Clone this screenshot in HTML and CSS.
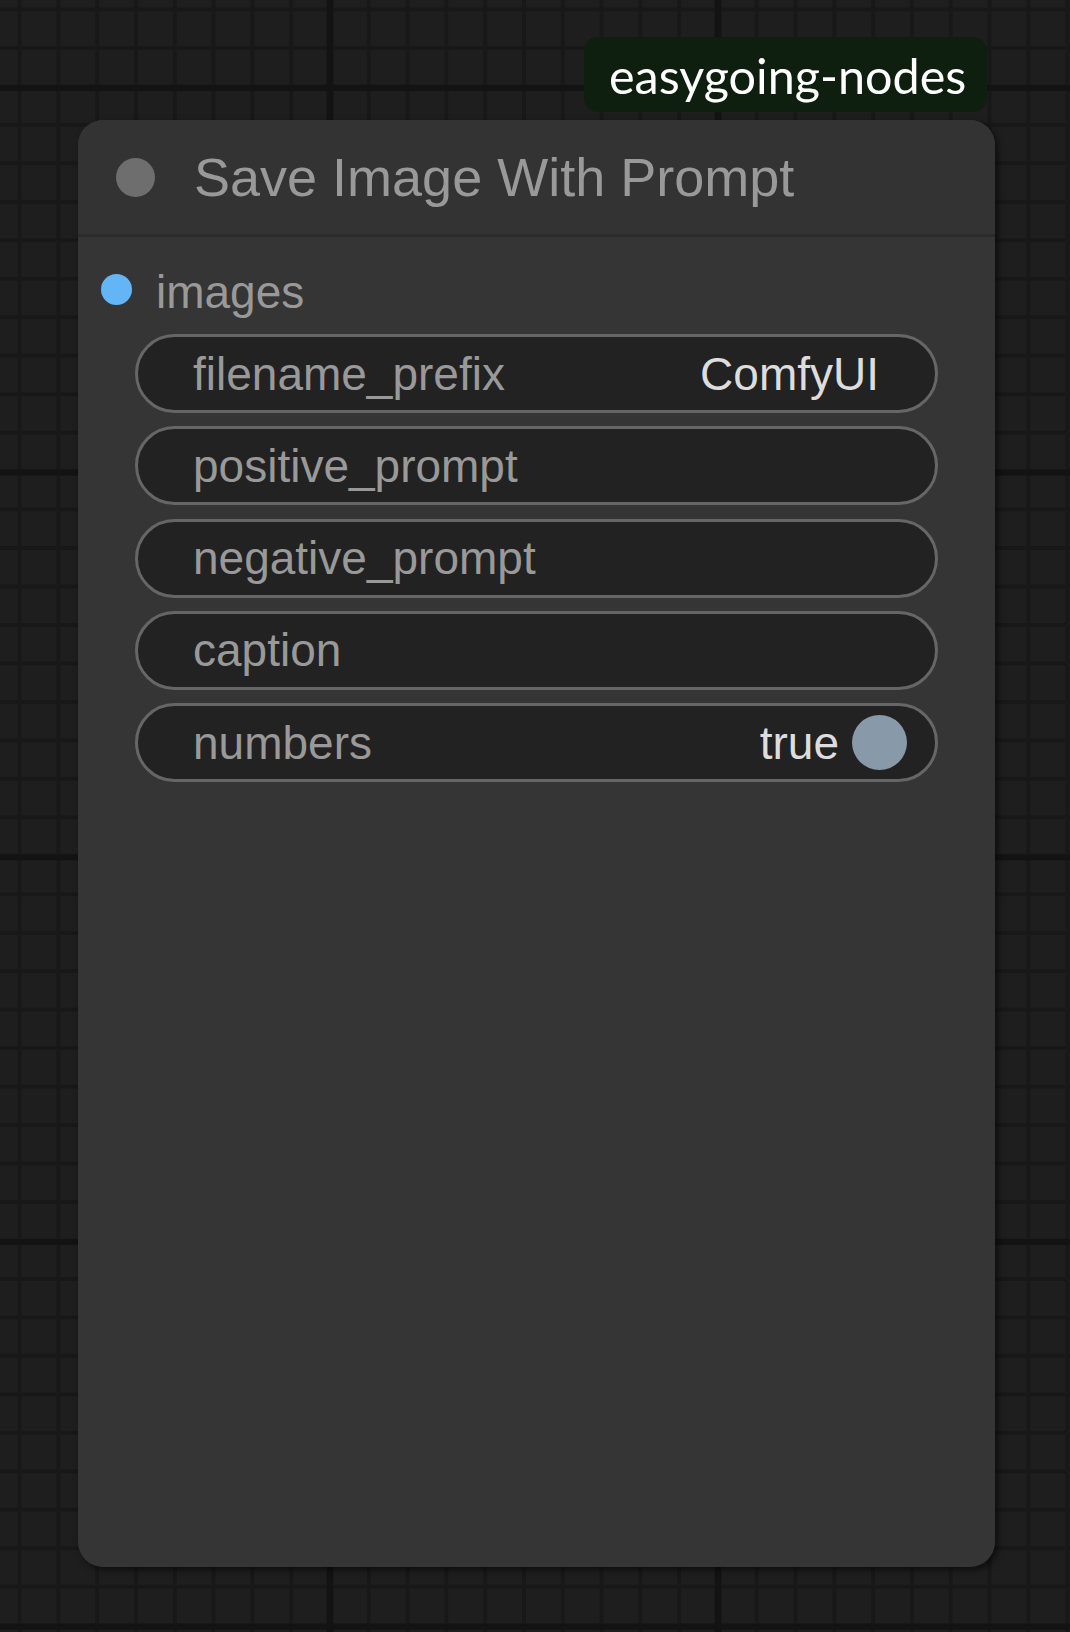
FILE: index.html
```html
<!DOCTYPE html>
<html lang="en">
<head>
<meta charset="utf-8">
<title>Save Image With Prompt</title>
<link rel="stylesheet" href="styles.css">
</head>
<body>
<div class="canvas">
  <div class="badge">easygoing-nodes</div>
  <div class="node">
    <div class="node-title">
      <span class="title-dot"></span>
      <span class="title-text">Save Image With Prompt</span>
    </div>
    <div class="node-body">
      <div class="slot">
        <span class="slot-dot"></span>
        <span class="slot-label">images</span>
      </div>
      <div class="widgets">
        <div class="widget"><span class="w-label">filename_prefix</span><span class="w-value">ComfyUI</span></div>
        <div class="widget"><span class="w-label">positive_prompt</span></div>
        <div class="widget"><span class="w-label">negative_prompt</span></div>
        <div class="widget"><span class="w-label">caption</span></div>
        <div class="widget toggle"><span class="w-label">numbers</span><span class="w-value">true</span><span class="knob"></span></div>
      </div>
    </div>
  </div>
</div>
</body>
</html>
```

FILE: styles.css
```css
html, body {
  margin: 0;
  padding: 0;
}

body {
  width: 1070px;
  height: 1632px;
  overflow: hidden;
  background-color: #1e1e1e;
  background-image:
    linear-gradient(to right, #131313 0, #131313 7px, transparent 7px),
    linear-gradient(to bottom, #131313 0, #131313 6px, transparent 6px),
    linear-gradient(to right, #181818 0, #181818 4px, transparent 4px),
    linear-gradient(to bottom, #181818 0, #181818 4px, transparent 4px);
  background-size:
    388px 388px,
    384.7px 384.7px,
    38.8px 38.8px,
    38.47px 38.47px;
  background-position:
    326.5px 0,
    0 85px,
    17.6px 0,
    0 7.5px;
}

.canvas {
  position: relative;
  width: 1070px;
  height: 1632px;
}

.badge {
  position: absolute;
  left: 584px;
  top: 37px;
  width: 403px;
  height: 75px;
  box-sizing: border-box;
  padding: 2px 0 0 25px;
  line-height: 73px;
  border-radius: 14px;
  background: #0f1f0f;
  color: #ffffff;
  font-family: Lato, "Open Sans", sans-serif;
  font-size: 48.5px;
  white-space: nowrap;
}

.node {
  position: absolute;
  left: 78px;
  top: 120px;
  width: 917px;
  height: 1447px;
  border-radius: 25px;
  background: #353535;
  box-shadow: 3px 3px 7px rgba(0, 0, 0, 0.55);
  overflow: hidden;
  font-family: "Liberation Sans", Arial, sans-serif;
}

.node-title {
  height: 114px;
  border-bottom: 3px solid #2b2b2b;
  background: #333333;
  display: flex;
  align-items: center;
  padding-left: 38px;
}

.title-dot {
  flex: none;
  width: 39px;
  height: 39px;
  border-radius: 50%;
  background: #6e6e6e;
  margin-right: 39px;
}

.title-text {
  font-size: 54px;
  color: #999999;
  white-space: nowrap;
}

.node-body {
  padding-top: 29px;
}

.slot {
  display: flex;
  align-items: center;
  height: 52px;
  padding-left: 23px;
}

.slot-dot {
  flex: none;
  width: 31px;
  height: 31px;
  border-radius: 50%;
  background: #64b5f6;
  margin-right: 24px;
  margin-bottom: 5px;
}

.slot-label {
  font-size: 46px;
  color: #999999;
}

.widgets {
  margin: 16px 57px 0 57px;
  display: flex;
  flex-direction: column;
  gap: 13.25px;
}

.widget {
  height: 79px;
  box-sizing: border-box;
  border: 3px solid #666666;
  border-radius: 40px;
  background: #222222;
  display: flex;
  align-items: center;
  padding: 0 56px 0 55px;
  font-size: 46px;
  white-space: nowrap;
}

.w-label {
  flex: 1;
  color: #999999;
}

.w-value {
  color: #dddddd;
}

.widget.toggle {
  padding-right: 28px;
}

.knob {
  flex: none;
  width: 55px;
  height: 55px;
  border-radius: 50%;
  background: #8899aa;
  margin-left: 13px;
}
```
